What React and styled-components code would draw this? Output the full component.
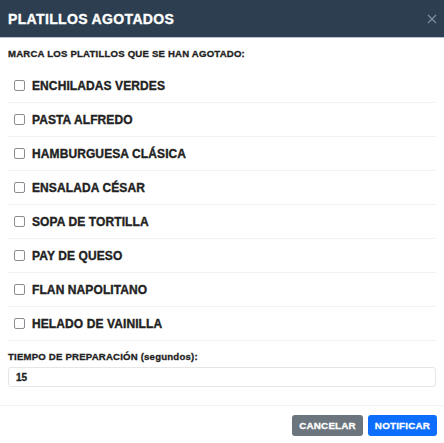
import React from 'react';
import styled, { createGlobalStyle } from 'styled-components';

const platillos = [
  'ENCHILADAS VERDES',
  'PASTA ALFREDO',
  'HAMBURGUESA CLÁSICA',
  'ENSALADA CÉSAR',
  'SOPA DE TORTILLA',
  'PAY DE QUESO',
  'FLAN NAPOLITANO',
  'HELADO DE VAINILLA',
];

const App = () => {
  return (
    <>
      <GlobalStyle />
      <Modal>
        <Header>
          <Title>PLATILLOS AGOTADOS</Title>
          <CloseButton aria-label="Cerrar">
            <svg width="10" height="10" viewBox="0 0 10 10">
              <path d="M1 1L9 9M9 1L1 9" stroke="#7f8c9d" strokeWidth="1.3" />
            </svg>
          </CloseButton>
        </Header>
        <Body>
          <Label>MARCA LOS PLATILLOS QUE SE HAN AGOTADO:</Label>
          <List>
            {platillos.map((p) => (
              <Row key={p}>
                <Check type="checkbox" />
                <ItemText>{p}</ItemText>
              </Row>
            ))}
          </List>
          <TimeLabel>TIEMPO DE PREPARACIÓN (segundos):</TimeLabel>
          <Input defaultValue="15" />
        </Body>
        <Footer>
          <Button variant="secondary">CANCELAR</Button>
          <Button variant="primary">NOTIFICAR</Button>
        </Footer>
      </Modal>
    </>
  );
};

const GlobalStyle = createGlobalStyle`
  html, body {
    margin: 0;
    padding: 0;
    background: #ffffff;
    font-family: "Liberation Sans", Arial, sans-serif;
  }
`;

const Modal = styled.div`
  width: 444px;
  height: 443px;
  background: #fff;
  display: flex;
  flex-direction: column;
`;

const Header = styled.div`
  height: 37px;
  background: #2c3e50;
  border-bottom: 1px solid #b4c0cc;
  display: flex;
  align-items: center;
  justify-content: space-between;
  padding: 0 7px 0 8px;
`;

const Title = styled.h2`
  margin: 0;
  color: #fff;
  font-size: 14px;
  font-weight: 700;
  letter-spacing: 0.35px;
  -webkit-text-stroke: 0.35px #fff;
`;

const CloseButton = styled.button`
  border: 0;
  background: transparent;
  padding: 0;
  width: 10px;
  height: 10px;
  display: flex;
  cursor: pointer;
`;

const Body = styled.div`
  padding: 9px 8px 18px;
  display: flex;
  flex-direction: column;
`;

const Label = styled.div`
  font-size: 9.6px;
  font-weight: 700;
  line-height: 14px;
  letter-spacing: 0.2px;
  color: #222;
  -webkit-text-stroke: 0.3px #222;
`;

const List = styled.div`
  margin-top: 8px;
  display: flex;
  flex-direction: column;
`;

const Row = styled.label`
  height: 33px;
  border-bottom: 1px solid #f1f1f1;
  display: flex;
  align-items: center;
  gap: 7px;
  padding-left: 6px;
`;

const Check = styled.input`
  appearance: none;
  margin: 0;
  width: 11px;
  height: 11px;
  border: 1px solid #8d8d8d;
  border-radius: 2px;
  background: #fff;
`;

const ItemText = styled.span`
  font-size: 12px;
  font-weight: 700;
  color: #222;
  letter-spacing: 0.1px;
  -webkit-text-stroke: 0.35px #222;
`;

const TimeLabel = styled(Label)`
  margin-top: 9px;
`;

const Input = styled.input`
  margin-top: 3px;
  height: 20px;
  box-sizing: border-box;
  border: 1px solid #e6e6e6;
  border-radius: 3px;
  padding: 0 7px;
  font-family: "Liberation Sans", Arial, sans-serif;
  font-size: 10px;
  font-weight: 700;
  color: #222;
  -webkit-text-stroke: 0.3px #222;
  outline: none;
`;

const Footer = styled.div`
  border-top: 1px solid #f1f1f1;
  padding: 9px 7px 0 8px;
  display: flex;
  justify-content: flex-end;
  gap: 5px;
`;

const Button = styled.button`
  height: 21px;
  padding: 0 7px;
  border: 0;
  border-radius: 3px;
  color: #fff;
  font-family: "Liberation Sans", Arial, sans-serif;
  font-size: 9.8px;
  font-weight: 700;
  letter-spacing: 0.2px;
  -webkit-text-stroke: 0.3px #fff;
  background: ${({ variant }) => (variant === 'primary' ? '#0d6efd' : '#6c757d')};
  cursor: pointer;
`;

export default App;
